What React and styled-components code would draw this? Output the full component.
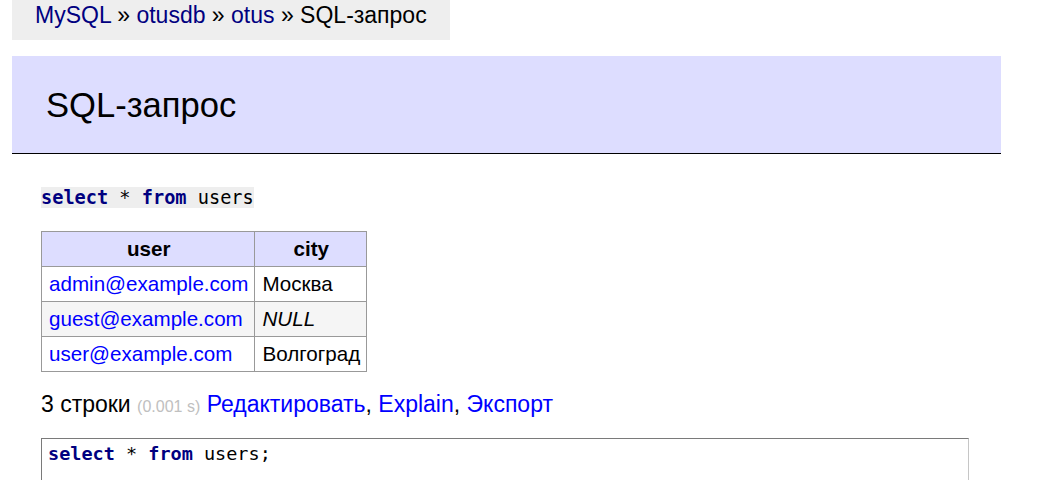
import React from "react";
import styled, { createGlobalStyle } from "styled-components";

const GlobalStyle = createGlobalStyle`
  html, body {
    margin: 0;
    padding: 0;
    background: #fff;
  }
  body {
    font-family: "Liberation Sans", Arial, sans-serif;
    font-size: 23px;
    line-height: 1.25;
    color: #000;
  }
`;

const Page = styled.div`
  display: flex;
  flex-direction: column;
  align-items: flex-start;
`;

const Breadcrumb = styled.nav`
  margin-left: 12px;
  height: 40px;
  padding: 0 23px;
  background: #eee;
  line-height: 30px;
  white-space: nowrap;
  box-sizing: border-box;
`;

const Crumb = styled.a`
  color: #000080;
  text-decoration: none;
`;

const Title = styled.h2`
  align-self: stretch;
  margin: 16px 52px 0 12px;
  padding: 28px 34px 27px;
  font-size: 34.6px;
  line-height: 42px;
  font-weight: normal;
  background: #ddf;
  border-bottom: 1px solid #000;
  color: #000;
`;

const Content = styled.main`
  align-self: stretch;
  display: flex;
  flex-direction: column;
  align-items: flex-start;
  padding-left: 41px;
`;

const SqlLine = styled.p`
  margin: 28px 0 0;
  line-height: 28px;
`;

const Code = styled.code`
  font-family: "DejaVu Sans Mono", monospace;
  font-size: 18.6px;
  background: ${(p) => (p.$bg ? "#eee" : "transparent")};
`;

const Kw = styled.span`
  color: #000080;
  font-weight: bold;
`;

const Table = styled.table`
  margin-top: 19px;
  border-collapse: collapse;
  font-size: 20.6px;
  line-height: 26px;
`;

const Th = styled.th`
  border: 1px solid #999;
  padding: 4px 6px 4px 7px;
  background: #ddf;
  font-weight: bold;
  text-align: center;
`;

const Tr = styled.tr`
  background: ${(p) => (p.$odd ? "#f5f5f5" : "#fff")};
`;

const Td = styled.td`
  border: 1px solid #999;
  padding: 4px 6px 4px 7px;
  text-align: left;
  white-space: nowrap;
`;

const Link = styled.a`
  color: #00f;
  text-decoration: none;
`;

const Null = styled.i`
  font-style: italic;
`;

const Result = styled.p`
  margin: 18px 0 0;
  line-height: 28px;
`;

const Time = styled.span`
  color: silver;
  font-size: 16px;
`;

const Editor = styled.div`
  margin-top: 17px;
  box-sizing: border-box;
  width: 928px;
  height: 250px;
  padding: 4px 6px;
  border-style: solid;
  border-width: 1px;
  border-color: #7a7a7a #c6c6c6 #c6c6c6 #7a7a7a;
  font-family: "DejaVu Sans Mono", monospace;
  font-size: 18.5px;
  line-height: normal;
  white-space: pre;
`;

const rows = [
  { user: "admin@example.com", city: "Москва" },
  { user: "guest@example.com", city: null },
  { user: "user@example.com", city: "Волгоград" },
];

export default function App() {
  return (
    <Page>
      <GlobalStyle />
      <Breadcrumb>
        <Crumb href="#">MySQL</Crumb> » <Crumb href="#">otusdb</Crumb> »{" "}
        <Crumb href="#">otus</Crumb> » SQL-запрос
      </Breadcrumb>
      <Title>SQL-запрос</Title>
      <Content>
        <SqlLine>
          <Code $bg>
            <Kw>select</Kw> * <Kw>from</Kw> users
          </Code>
        </SqlLine>
        <Table>
          <thead>
            <tr>
              <Th>user</Th>
              <Th>city</Th>
            </tr>
          </thead>
          <tbody>
            {rows.map((r, i) => (
              <Tr key={r.user} $odd={i % 2 === 1}>
                <Td>
                  <Link href="#">{r.user}</Link>
                </Td>
                <Td>{r.city === null ? <Null>NULL</Null> : r.city}</Td>
              </Tr>
            ))}
          </tbody>
        </Table>
        <Result>
          3 строки <Time>(0.001 s)</Time> <Link href="#">Редактировать</Link>,{" "}
          <Link href="#">Explain</Link>, <Link href="#">Экспорт</Link>
        </Result>
        <Editor>
          <Kw>select</Kw> * <Kw>from</Kw> users;
        </Editor>
      </Content>
    </Page>
  );
}
